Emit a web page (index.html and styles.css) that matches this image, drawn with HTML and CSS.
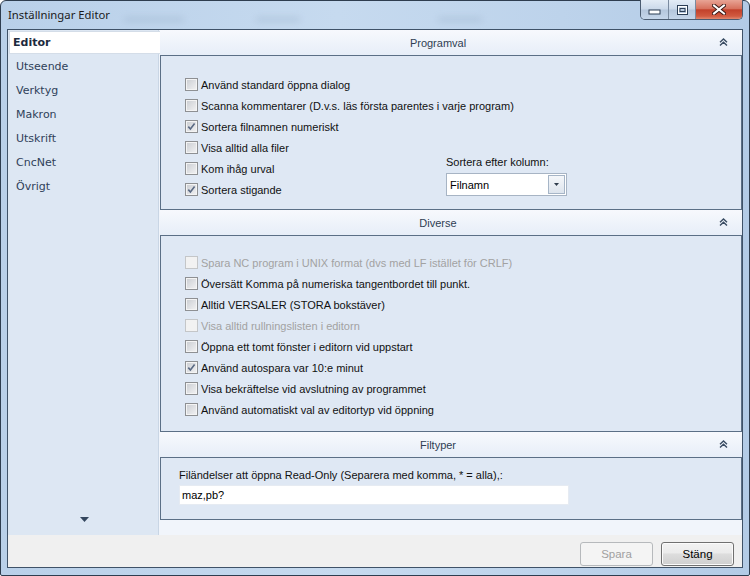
FILE: index.html
```html
<!DOCTYPE html>
<html lang="sv">
<head>
    <meta charset="UTF-8">
    <title>Inställningar Editor</title>
    <link rel="stylesheet" href="styles.css">
</head>
<body>
<div class="window">
    <div class="titlebar">
        <span class="title">Inställningar Editor</span>
        <div class="glass">
            <span class="smudge s1"></span>
            <span class="smudge s2"></span>
            <span class="smudge s3"></span>
        </div>
        <div class="caption-buttons">
            <span class="cap-btn min">
                <svg width="13" height="6" viewBox="0 0 13 6"><rect x="1" y="1" width="11" height="4" fill="#fff" stroke="#2c3e55" stroke-width="1"/></svg>
            </span>
            <span class="cap-btn max">
                <svg width="11" height="10" viewBox="0 0 11 10"><rect x="0.5" y="0.5" width="10" height="9" fill="none" stroke="#2c3e55"/><rect x="1.5" y="1.5" width="8" height="7" fill="none" stroke="#fff" stroke-width="1"/><rect x="3" y="3.5" width="5" height="3" fill="none" stroke="#2c3e55"/></svg>
            </span>
            <span class="cap-btn close">
                <svg width="14" height="11" viewBox="0 0 14 11"><path d="M2 1.5 L12 9.5 M12 1.5 L2 9.5" stroke="#3b1a16" stroke-width="4" stroke-linecap="square"/><path d="M2 1.5 L12 9.5 M12 1.5 L2 9.5" stroke="#fff" stroke-width="2" stroke-linecap="square"/></svg>
            </span>
        </div>
    </div>
    <div class="client">
        <div class="main">
            <div class="nav">
                <ul class="nav-list">
                    <li class="active">Editor</li>
                    <li>Utseende</li>
                    <li>Verktyg</li>
                    <li>Makron</li>
                    <li>Utskrift</li>
                    <li>CncNet</li>
                    <li>Övrigt</li>
                </ul>
                <div class="nav-more">
                    <svg width="9" height="5" viewBox="0 0 9 5"><path d="M0 0 H9 L4.5 5 Z" fill="#34475e"/></svg>
                </div>
            </div>
            <div class="panels">
                <div class="group">
                    <div class="group-header">
                        <span class="group-title">Programval</span>
                        <span class="collapse"><svg width="9" height="8" viewBox="0 0 9 8"><path d="M1 4.2 L4.5 1 L8 4.2 M1 7.5 L4.5 4.3 L8 7.5" fill="none" stroke="#3a4c63" stroke-width="1.4"/></svg></span>
                    </div>
                    <div class="group-body programval">
                        <div class="check-list">
                            <label class="check"><span class="box"></span>Använd standard öppna dialog</label>
                            <label class="check"><span class="box"></span>Scanna kommentarer (D.v.s. läs första parentes i varje program)</label>
                            <label class="check"><span class="box checked"></span>Sortera filnamnen numeriskt</label>
                            <label class="check"><span class="box"></span>Visa alltid alla filer</label>
                            <label class="check"><span class="box"></span>Kom ihåg urval</label>
                            <label class="check"><span class="box checked"></span>Sortera stigande</label>
                        </div>
                        <div class="sort-column">
                            <span class="field-label">Sortera efter kolumn:</span>
                            <div class="combo">
                                <span class="combo-value">Filnamn</span>
                                <span class="combo-btn"><svg width="5" height="3" viewBox="0 0 5 3"><path d="M0 0 H5 L2.5 3 Z" fill="#2f3c4c"/></svg></span>
                            </div>
                        </div>
                    </div>
                </div>
                <div class="group">
                    <div class="group-header">
                        <span class="group-title">Diverse</span>
                        <span class="collapse"><svg width="9" height="8" viewBox="0 0 9 8"><path d="M1 4.2 L4.5 1 L8 4.2 M1 7.5 L4.5 4.3 L8 7.5" fill="none" stroke="#3a4c63" stroke-width="1.4"/></svg></span>
                    </div>
                    <div class="group-body diverse">
                        <label class="check disabled"><span class="box"></span>Spara NC program i UNIX format (dvs med LF istället för CRLF)</label>
                        <label class="check"><span class="box"></span>Översätt Komma på numeriska tangentbordet till punkt.</label>
                        <label class="check"><span class="box"></span>Alltid VERSALER (STORA bokstäver)</label>
                        <label class="check disabled"><span class="box"></span>Visa alltid rullningslisten i editorn</label>
                        <label class="check"><span class="box"></span>Öppna ett tomt fönster i editorn vid uppstart</label>
                        <label class="check"><span class="box checked"></span>Använd autospara var 10:e minut</label>
                        <label class="check"><span class="box"></span>Visa bekräftelse vid avslutning av programmet</label>
                        <label class="check"><span class="box"></span>Använd automatiskt val av editortyp vid öppning</label>
                    </div>
                </div>
                <div class="group">
                    <div class="group-header">
                        <span class="group-title">Filtyper</span>
                        <span class="collapse"><svg width="9" height="8" viewBox="0 0 9 8"><path d="M1 4.2 L4.5 1 L8 4.2 M1 7.5 L4.5 4.3 L8 7.5" fill="none" stroke="#3a4c63" stroke-width="1.4"/></svg></span>
                    </div>
                    <div class="group-body filtyper">
                        <span class="field-label">Filändelser att öppna Read-Only (Separera med komma, * = alla),:</span>
                        <div class="text-input">maz,pb?</div>
                    </div>
                </div>
            </div>
        </div>
        <div class="footer">
            <button class="btn" disabled>Spara</button>
            <button class="btn">Stäng</button>
        </div>
    </div>
</div>
</body>
</html>
```

FILE: styles.css
```css
* {
    box-sizing: border-box;
}
body {
    margin: 0;
    font-family: "Liberation Sans", Arial, sans-serif;
    font-size: 11px;
    color: #000;
}
.window {
    width: 750px;
    height: 576px;
    display: flex;
    flex-direction: column;
    border: 1px solid #2e3d4f;
    border-radius: 6px 6px 2px 2px;
    background: linear-gradient(to right, #b9d0e9, #c6daef 45%, #bdd3eb 75%, #b3cbe6);
    padding: 0 6px 7px 6px;
}
.titlebar {
    height: 28px;
    display: flex;
    align-items: flex-start;
    position: relative;
}
.title {
    font-family: "Noto Sans", "Open Sans", sans-serif;
    font-size: 11.3px;
    line-height: 16px;
    padding: 6px 0 0 1px;
    color: #1b1b1b;
}
.glass {
    flex: 1;
    display: flex;
    height: 28px;
}
.smudge {
    display: block;
    height: 5px;
    margin-top: 16px;
    background: rgba(130, 155, 185, 0.25);
    filter: blur(3px);
    border-radius: 3px;
}
.smudge.s1 { width: 60px; margin-left: 14px; }
.smudge.s2 { width: 44px; margin-left: 72px; }
.smudge.s3 { width: 44px; margin-left: 138px; }
.caption-buttons {
    display: flex;
    margin-top: -1px;
    height: 20px;
    border: 1px solid #4b5c71;
    border-top: none;
    border-radius: 0 0 5px 5px;
    overflow: hidden;
}
.cap-btn {
    display: flex;
    align-items: center;
    justify-content: center;
    height: 19px;
    background: linear-gradient(to bottom, #e3ecf6, #cbd9ea 48%, #b4c6dc 52%, #c5d6ea);
}
.cap-btn.min {
    width: 28px;
    border-right: 1px solid #7a8ba0;
    padding-top: 5px;
}
.cap-btn.max {
    width: 27px;
    border-right: 1px solid #7a8ba0;
}
.cap-btn.close {
    width: 46px;
    background: linear-gradient(to bottom, #e8a495, #d7725e 45%, #c2412b 52%, #d15a40 85%, #e08870);
}
.client {
    flex: 1;
    display: flex;
    flex-direction: column;
    border: 1px solid #3f5268;
    background: #f0f0f0;
}
.main {
    flex: 1;
    display: flex;
    background: #f1f5fb;
}
.nav {
    width: 151px;
    margin-right: 1px;
    background: #dde7f3;
    border-right: 1px solid #c9d6e5;
    display: flex;
    flex-direction: column;
    font-family: "DejaVu Sans", Verdana, sans-serif;
    font-size: 11px;
    color: #2f4159;
}
.nav-list {
    list-style: none;
    margin: 0;
    padding: 0;
    flex: 1;
}
.nav-list li {
    height: 24px;
    line-height: 26px;
    padding-left: 8px;
}
.nav-list li.active {
    height: 23px;
    line-height: 21px;
    margin: 1px -2px 0 1px;
    padding-left: 3px;
    background: #fff;
    border: 1px solid #d4dde8;
    border-right: none;
    font-weight: bold;
    color: #1c2a3e;
}
.nav-more {
    height: 20px;
    display: flex;
    justify-content: center;
    padding: 2px 0 0 2px;
}
.panels {
    flex: 1;
    display: flex;
    flex-direction: column;
}
.group-header {
    height: 25px;
    display: flex;
    align-items: center;
    background: linear-gradient(to bottom, #f7f9fd, #e7eef8);
    color: #2f3e53;
}
.group-title {
    flex: 1;
    text-align: center;
    padding-left: 1px;
}
.collapse {
    width: 27px;
    display: flex;
    padding-left: 4px;
    padding-bottom: 1px;
}
.group-body {
    border: 1px solid #5b6f86;
    background: #dfe8f4;
}
.group-body.programval {
    display: flex;
    padding: 18px 0 9px 24px;
}
.check-list {
    width: 261px;
}
.check {
    display: flex;
    align-items: center;
    height: 21px;
    white-space: nowrap;
    color: #111;
}
.box {
    width: 13px;
    height: 13px;
    margin-right: 3px;
    border: 1px solid #8e9093;
    background: linear-gradient(135deg, #c9ccd1, #f3f3f4);
    box-shadow: inset 0 0 0 1px #f4f4f4;
    flex: none;
}
.box.checked {
    background:
        url("data:image/svg+xml;utf8,<svg xmlns='http://www.w3.org/2000/svg' width='11' height='11' viewBox='0 0 11 11'><path d='M2.3 5.6 L4.4 8 L8.6 2.6' fill='none' stroke='%235a6a84' stroke-width='1.6'/></svg>") center / 11px 11px no-repeat,
        linear-gradient(135deg, #c9ccd1, #f3f3f4);
}
.check.disabled {
    color: #a2a2a2;
}
.check.disabled .box {
    border-color: #c4c6c8;
    background: #f2f2f2;
    box-shadow: none;
}
.group-body.diverse {
    padding: 16px 0 11px 24px;
}
.sort-column {
    display: flex;
    flex-direction: column;
    justify-content: flex-end;
    padding-bottom: 4px;
}
.field-label {
    display: block;
    line-height: 13px;
    color: #111;
}
.combo {
    display: flex;
    align-items: center;
    width: 121px;
    height: 23px;
    margin-top: 4px;
    border: 1px solid #a7b4c4;
    background: #fff;
    padding: 1px;
}
.combo-value {
    flex: 1;
    padding-left: 2px;
}
.combo-btn {
    width: 17px;
    height: 19px;
    display: flex;
    align-items: center;
    justify-content: center;
    border: 1px solid #a6b5c7;
    background: linear-gradient(to bottom, #f5f7fa, #dde4ed);
}
.group-body.filtyper {
    padding: 11px 0 14px 18px;
}
.text-input {
    width: 390px;
    height: 20px;
    margin-top: 3px;
    background: #fff;
    border: 1px solid #e6ebf2;
    line-height: 18px;
    padding-left: 2px;
}
.footer {
    height: 32px;
    display: flex;
    justify-content: flex-end;
    align-items: flex-start;
    gap: 8px;
    padding: 7px 8px 0 0;
}
.btn {
    width: 73px;
    height: 24px;
    font-family: "Liberation Sans", Arial, sans-serif;
    font-size: 11.5px;
    color: #000;
    border: 1px solid #707070;
    border-radius: 3px;
    background: linear-gradient(to bottom, #f2f2f2, #ebebeb 45%, #dddddd 50%, #cfcfcf);
    box-shadow: inset 0 0 0 1px #fbfbfb;
    padding: 0;
}
.btn:disabled {
    color: #a0a0a0;
    border-color: #b6b9bc;
    background: #f4f4f4;
    box-shadow: none;
}
```
